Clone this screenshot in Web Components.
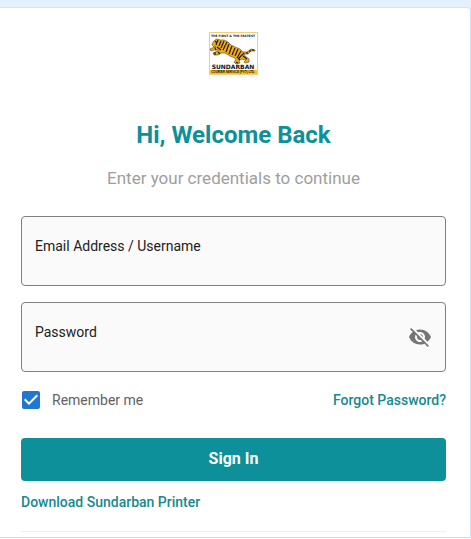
<!DOCTYPE html>
<html lang="en">
<head>
<meta charset="utf-8">
<meta name="viewport" content="width=device-width, initial-scale=1">
<title>Sign In</title>
<style>
  html { background: #fff; }
  body { margin: 0; font-family: Roboto, "Liberation Sans", sans-serif; font-size: 14px; line-height: 20px; color: #212121; }
</style>
</head>
<body>
<login-page></login-page>
<script>
const define = (name, html, setup) => {
  customElements.define(name, class extends HTMLElement {
    constructor() {
      super();
      this.attachShadow({ mode: 'open' }).innerHTML = html;
    }
    connectedCallback() { if (setup) setup(this, this.shadowRoot); }
  });
};

define('brand-logo', `
  <style>:host { display: block; } svg { display: block; margin: 0 auto; }</style>
  <svg width="50" height="43" viewBox="0 0 50 43" role="img" aria-label="Sundarban Courier Service">
    <rect x=".5" y=".5" width="48" height="42" fill="#fff" stroke="#f0cf80"/>
    <rect x="1" y="38" width="47" height="4" fill="#fdbf1e"/>
    <g font-weight="700" text-anchor="middle" fill="#111">
      <text x="24" y="5" font-size="3" font-family="DejaVu Sans, sans-serif">THE FIRST &amp; THE FASTEST</text>
      <text x="24" y="37" font-size="6" font-family="DejaVu Sans, sans-serif">SUNDARBAN</text>
      <text x="24" y="41" font-size="3" font-family="Liberation Sans, sans-serif">COURIER SERVICE (PVT) LTD.</text>
    </g>
    <path d="M3 13 4 10 6 8 8 7 11 8 15 8 19 10 22 13 26 15 31 17 34 20 38 20 42 17 46 18 46 19 42 19 39 22 35 22 36 24 40 27 40 30 36 31 35 30 37 28 32 27 30 29 31 31 27 32 25 30 27 28 26 26 21 24 16 21 12 21 9 23 5 23 4 21 9 19 9 18 5 18 2 19 1 17 3 16 7 15 5 15Z" fill="#efac20" stroke="#5c420a" stroke-width=".6"/>
    <path d="m6 9 2 2M9 8l-2 5M12 9l-2 5M15 9l-3 7M18 10l-4 8M20 12l-3 8M23 14l-3 8M26 16l-3 7M29 17l-3 7M32 19l-4 7M35 21l-5 5M8 15l4 3M6 16l1 2M9 20l2 2M6 20v3M34 24l4 3M29 26l2 2M27 30l2 1M38 20v2M41 18v2M44 17v2" fill="none" stroke="#241b05" stroke-width="1.2"/>
  </svg>`);

define('text-field', `
  <style>
    :host { display: block; }
    .box { display: flex; align-items: center; box-sizing: border-box; min-height: 70px; border: 1px solid #808080; border-radius: 4px; background: #fafafa; padding: 0 13px; }
    .entry { flex: 1; min-width: 0; display: grid; }
    label { line-height: 20px; }
    input { min-width: 0; height: 10px; padding: 0; border: 0; outline: 0; background: none; font: inherit; color: inherit; }
    .box:focus-within { border-color: #0d9099; }
  </style>
  <div class="box"><div class="entry"><label for="entry"></label><input id="entry"></div><slot name="end"></slot></div>`,
  (host, root) => {
    root.querySelector('label').textContent = host.getAttribute('label');
    root.querySelector('input').type = host.getAttribute('type') || 'text';
  });

define('visibility-button', `
  <style>
    :host { display: block; }
    button { display: block; padding: 0; border: 0; background: none; color: #757575; cursor: pointer; }
    svg { display: block; }
  </style>
  <button type="button" aria-label="Toggle password visibility">
    <svg width="24" height="24" viewBox="0 0 24 24" fill="currentColor"><path d="M12 7c2.76 0 5 2.24 5 5 0 .65-.13 1.26-.36 1.83l2.92 2.92c1.51-1.26 2.7-2.89 3.43-4.75-1.73-4.39-6-7.5-11-7.5-1.4 0-2.74.25-3.98.7l2.16 2.16C10.74 7.13 11.35 7 12 7zM2 4.27l2.28 2.28.46.46C3.08 8.3 1.78 10.02 1 12c1.73 4.39 6 7.5 11 7.5 1.55 0 3.03-.3 4.38-.84l.42.42L19.73 22 21 20.73 3.27 3 2 4.27zM7.53 9.8l1.55 1.55c-.05.21-.08.43-.08.65 0 1.66 1.34 3 3 3 .22 0 .44-.03.65-.08l1.55 1.55c-.67.33-1.41.53-2.2.53-2.76 0-5-2.24-5-5 0-.79.2-1.53.53-2.2zm4.31-.78 3.15 3.15.02-.16c0-1.66-1.34-3-3-3l-.17.01z"/></svg>
  </button>`);

define('check-option', `
  <style>
    :host { display: block; }
    label { display: flex; align-items: center; gap: 12px; padding-left: 1px; color: #616161; }
    .mark { display: grid; }
    input, svg { grid-area: 1 / 1; }
    input { appearance: none; width: 18px; height: 18px; margin: 0; border: 2px solid #616161; border-radius: 2px; box-sizing: border-box; }
    input:checked { border-color: #1f77d0; background: #1f77d0; }
    input:not(:checked) + svg { visibility: hidden; }
    svg { pointer-events: none; }
  </style>
  <label><span class="mark"><input type="checkbox" checked><svg width="18" height="18" viewBox="3 3 18 18"><path d="m10 17-5-5 1.41-1.41L10 14.17l7.59-7.59L19 8z" fill="#fff"/></svg></span><slot></slot></label>`);

define('text-link', `
  <style>:host { display: block; } a { color: #168991; font-weight: 500; text-decoration: none; }</style>
  <a href="#"><slot></slot></a>`);

define('primary-button', `
  <style>
    :host { display: block; }
    button { display: block; width: 100%; padding: 10px 16px 11px; border: 0; border-radius: 4px; background: #0d9099; color: #fff; font: inherit; font-size: 16px; line-height: 22px; font-weight: 700; cursor: pointer; }
  </style>
  <button type="submit"><slot></slot></button>`);

define('login-card', `
  <style>
    :host { display: block; background: #fff; border: solid #cbe4f7; border-width: 1px 1px 0 0; border-top-right-radius: 4px; border-bottom: 1px solid #d5d9dc; padding: 24px 24px 5px 21px; }
    header { text-align: center; }
    h1 { margin: 44px 0 0; font-size: 24px; line-height: 32px; font-weight: 700; color: #0d9099; }
    p { margin: 16px 0 0; font-size: 17px; line-height: 22px; color: #9e9e9e; }
    form { display: grid; gap: 16px; margin-top: 27px; }
    .row { display: flex; flex-wrap: wrap; justify-content: space-between; align-items: center; margin: 2px 0 12px; }
    .download { margin-top: 11px; }
    hr { margin: 19px 0 0; border: 0; border-top: 1px solid #eee; }
  </style>
  <header>
    <brand-logo></brand-logo>
    <h1>Hi, Welcome Back</h1>
    <p>Enter your credentials to continue</p>
  </header>
  <form>
    <text-field label="Email Address / Username"></text-field>
    <text-field label="Password" type="password"><visibility-button slot="end"></visibility-button></text-field>
    <div class="row"><check-option>Remember me</check-option><text-link>Forgot Password?</text-link></div>
    <primary-button>Sign In</primary-button>
  </form>
  <text-link class="download">Download Sundarban Printer</text-link>
  <hr>`);

define('login-page', `
  <style>:host { display: block; padding-top: 7px; background: #e3f1fc; }</style>
  <login-card></login-card>`);
</script>
</body>
</html>
